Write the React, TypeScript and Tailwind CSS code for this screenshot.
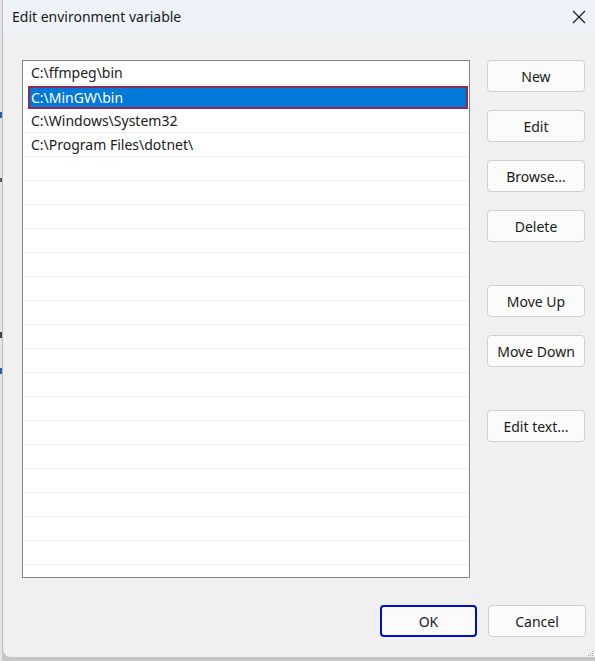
import React from "react";

const items = ["C:\\ffmpeg\\bin", "C:\\MinGW\\bin", "C:\\Windows\\System32", "C:\\Program Files\\dotnet\\"];

function Btn({ label, className = "" }: { label: string; className?: string }) {
  return (
    <div
      className={`w-[98px] h-[32px] rounded-[4px] border border-[#d1d1d1] bg-[#fbfbfb] flex items-center justify-center text-[14px] text-[#1a1a1a] ${className}`}
    >
      {label}
    </div>
  );
}

export default function App() {
  const rows = Array.from({ length: 22 }, (_, i) => items[i] ?? "");
  return (
    <div
      className="w-[595px] h-[661px] bg-[#c6c6c6] flex overflow-hidden"
      style={{ fontFamily: '"Noto Sans", "Open Sans", sans-serif' }}
    >
      <div className="w-[2px] h-full bg-[#e4e4e4] flex flex-col">
        <div className="h-[112px]" />
        <div className="h-[6px] bg-[#2a5fa8]" />
        <div className="h-[60px]" />
        <div className="h-[4px] bg-[#555]" />
        <div className="h-[150px]" />
        <div className="h-[6px] bg-[#444]" />
        <div className="h-[30px]" />
        <div className="h-[6px] bg-[#2a5fa8]" />
      </div>
      <div className="flex-1 h-[657px] bg-[#f0f0f0] rounded-bl-[8px] flex flex-col relative border-l border-[#bdbdbd]">
        <div className="h-[33px] bg-[#eef3f9] flex items-center justify-between pl-[9px] pr-[8px]">
          <span className="text-[14px] text-[#1a1a1a]">Edit environment variable</span>
          <svg width="16" height="16" viewBox="0 0 16 16" className="mr-[0px]">
            <path d="M2 2 L14 14 M14 2 L2 14" stroke="#1a1a1a" strokeWidth="1.2" fill="none" />
          </svg>
        </div>
        <div className="flex pl-[19px] pt-[27px] pr-[9px]">
          <div className="w-[448px] h-[518px] border border-[#838383] bg-white overflow-hidden pt-[0px]">
            {rows.map((t, i) => (
              <div key={i} className="h-[24px] ml-[1px] flex flex-col">
                <div className="h-[23px] relative flex items-center">
                  {i === 1 ? (
                    <div className="absolute left-[4px] right-[1px] top-[1px] h-[23px] bg-[#0078d7] border-2 border-[#8c2b54] flex items-center pl-[1px] text-white text-[14px]">
                      {t}
                    </div>
                  ) : (
                    <span className="pl-[7px] text-[14px] text-[#1a1a1a]">{t}</span>
                  )}
                </div>
                <div className="h-[1px] ml-[1px] bg-[#efefef]" />
              </div>
            ))}
          </div>
          <div className="flex flex-col ml-[17px]">
            <Btn label="New" />
            <Btn label="Edit" className="mt-[18px]" />
            <Btn label="Browse..." className="mt-[18px]" />
            <Btn label="Delete" className="mt-[18px]" />
            <Btn label="Move Up" className="mt-[43px]" />
            <Btn label="Move Down" className="mt-[18px]" />
            <Btn label="Edit text..." className="mt-[43px]" />
          </div>
        </div>
        <div className="flex justify-end pr-[9px] pt-[27px] gap-[11px]">
          <div className="w-[97px] h-[32px] rounded-[4px] border-2 border-[#0010c8] bg-[#fbfbfb] flex items-center justify-center text-[14px] text-[#1a1a1a]">
            OK
          </div>
          <Btn label="Cancel" />
        </div>
        <div className="absolute right-[2px] bottom-[1px] grid grid-cols-3 gap-[1px]">
          <div className="w-[1px] h-[1px]" />
          <div className="w-[1px] h-[1px]" />
          <div className="w-[1px] h-[1px] bg-[#aaa]" />
          <div className="w-[1px] h-[1px]" />
          <div className="w-[1px] h-[1px] bg-[#aaa]" />
          <div className="w-[1px] h-[1px] bg-[#aaa]" />
          <div className="w-[1px] h-[1px] bg-[#aaa]" />
          <div className="w-[1px] h-[1px] bg-[#aaa]" />
          <div className="w-[1px] h-[1px] bg-[#aaa]" />
        </div>
      </div>
    </div>
  );
}
